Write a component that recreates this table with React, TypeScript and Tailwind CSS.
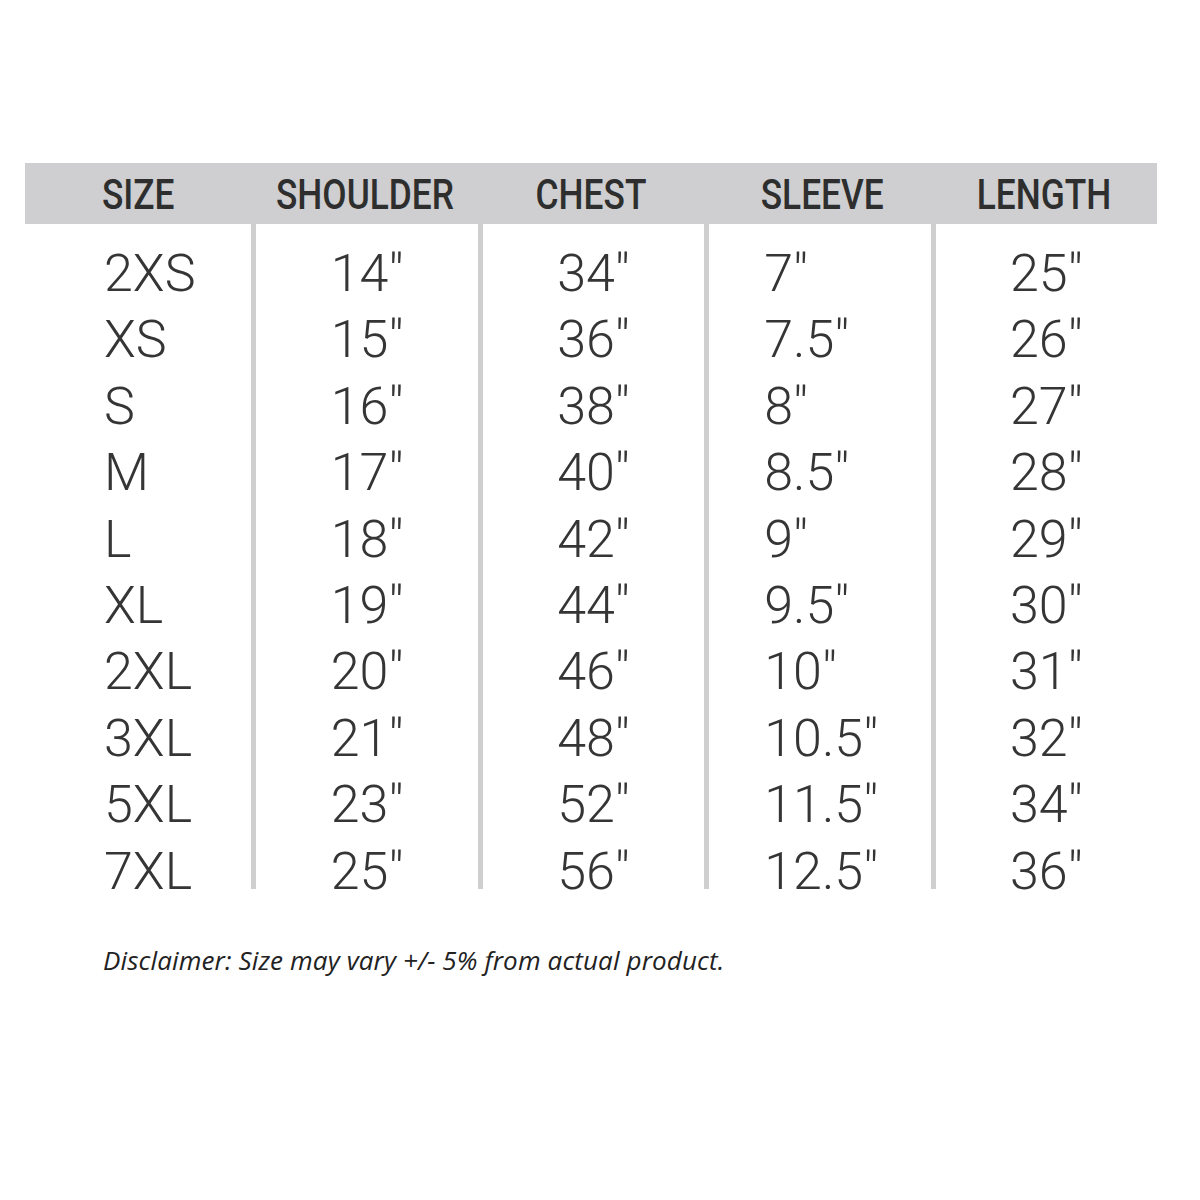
import React from "react";

type Column = {
    label: string;
    values: string[];
    align: "left" | "center";
};

const columns: Column[] = [
    {
        label: "SIZE",
        values: ["2XS", "XS", "S", "M", "L", "XL", "2XL", "3XL", "5XL", "7XL"],
        align: "left",
    },
    {
        label: "SHOULDER",
        values: ['14"', '15"', '16"', '17"', '18"', '19"', '20"', '21"', '23"', '25"'],
        align: "center",
    },
    {
        label: "CHEST",
        values: ['34"', '36"', '38"', '40"', '42"', '44"', '46"', '48"', '52"', '56"'],
        align: "center",
    },
    {
        label: "SLEEVE",
        values: ['7"', '7.5"', '8"', '8.5"', '9"', '9.5"', '10"', '10.5"', '11.5"', '12.5"'],
        align: "left",
    },
    {
        label: "LENGTH",
        values: ['25"', '26"', '27"', '28"', '29"', '30"', '31"', '32"', '34"', '36"'],
        align: "center",
    },
];

// padding for the left-aligned columns
const bodyPad = ["pl-[79px]", "", "", "pl-[55px]", ""];
// sleeve header sits a touch right of centre
const headPad = ["", "", "", "pl-[9px]", ""];

const App: React.FC = () => {
    return (
        <div className="min-h-[1200px] w-[1200px] bg-white pt-[163px] pl-[25px]">
            <div className="w-[1132px]">
                {/* header bar */}
                <div className="grid h-[61px] grid-cols-5 bg-[#cfcfd1] pt-[3px] font-['Roboto',sans-serif] text-[42px] font-medium leading-[58px] text-[#2e2e2e]">
                    {columns.map((col, i) => (
                        <div key={col.label} className={"text-center " + headPad[i]}>
                            <span className="inline-block scale-x-[0.84]">
                                {col.label}
                            </span>
                        </div>
                    ))}
                </div>

                {/* body */}
                <div className="grid grid-cols-5 font-['Roboto',sans-serif] text-[52px] font-light text-[#353535]">
                    {columns.map((col, i) => (
                        <div
                            key={col.label}
                            className={
                                i === 0
                                    ? "h-[665px]"
                                    : "h-[665px] border-l-[5px] border-[#cfcfcf]"
                            }
                        >
                            <div
                                className={
                                    (col.align === "center"
                                        ? "text-center "
                                        : "text-left ") +
                                    "pt-[17px] " +
                                    bodyPad[i]
                                }
                            >
                                {col.values.map((v) => (
                                    <div key={v} className="h-[66.4px] leading-[66.4px]">
                                        {v}
                                    </div>
                                ))}
                            </div>
                        </div>
                    ))}
                </div>
            </div>

            <p className="mt-[52px] pl-[78px] font-['Open_Sans',sans-serif] text-[26px] italic tracking-[0.005em] text-[#222]">
                Disclaimer: Size may vary +/- 5% from actual product.
            </p>
        </div>
    );
};

export default App;
